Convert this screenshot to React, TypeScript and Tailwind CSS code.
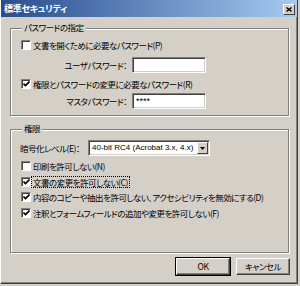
import React from "react";

const jp = "font-['Noto_Sans_CJK_JP',sans-serif] [font-feature-settings:'palt'] text-[8.5px] tracking-[-0.5px] leading-none text-black whitespace-nowrap";

function Check({ checked }: { checked: boolean }) {
  return (
    <span className="w-[10px] h-[10px] shrink-0 bg-white border border-t-[#808080] border-l-[#808080] border-b-white border-r-white shadow-[inset_1px_1px_0_#404040] flex items-center justify-center">
      {checked && (
        <svg width="7" height="7" viewBox="0 0 7 7" className="ml-[1px] mt-[1px]">
          <path d="M0.5 2.5 L2.5 4.5 L6.5 0.5" stroke="#000" strokeWidth="1.6" fill="none" />
        </svg>
      )}
    </span>
  );
}

function CheckRow({ checked, label, focus }: { checked: boolean; label: string; focus?: boolean }) {
  return (
    <div className="flex items-center h-[12px] pl-[10px]">
      <Check checked={checked} />
      <span className={`ml-[1px] px-[1px] py-[1px] ${focus ? "outline outline-1 outline-dotted outline-black" : ""} ${jp}`}>
        {label}
      </span>
    </div>
  );
}

function Sunken({ className, children }: { className?: string; children?: React.ReactNode }) {
  return (
    <div
      className={`bg-white border border-t-[#808080] border-l-[#808080] border-b-white border-r-white shadow-[inset_1px_1px_0_#404040,inset_-1px_-1px_0_#d4d0c8] ${className ?? ""}`}
    >
      {children}
    </div>
  );
}

function Group({ title, className, children }: { title: string; className?: string; children: React.ReactNode }) {
  return (
    <div className={`relative w-[279px] border border-[#808080] shadow-[inset_1px_1px_0_#fff,1px_1px_0_#fff] ${className ?? ""}`}>
      <span className={`absolute left-[11px] top-[-6px] bg-[#d4d0c8] px-[2px] ${jp}`}>{title}</span>
      {children}
    </div>
  );
}

function Button({ label, def }: { label: string; def?: boolean }) {
  const inner = (
    <div className="w-[54px] h-[17px] bg-[#d4d0c8] border border-t-white border-l-white border-b-[#404040] border-r-[#404040] shadow-[inset_-1px_-1px_0_#808080] flex items-center justify-center">
      <span className={jp}>{label}</span>
    </div>
  );
  if (def) return <div className="border border-black">{inner}</div>;
  return inner;
}

export default function App() {
  return (
    <div className="w-[300px] h-[286px] bg-[#d4d0c8]">
      <div className="w-[298px] h-[284px] bg-[#d4d0c8] border-l border-l-white border-r border-r-[#404040] border-b border-b-[#404040] shadow-[inset_-1px_-1px_0_#808080] flex flex-col">
        <div className="h-[17px] bg-gradient-to-r from-[#2a4c8e] to-[#a6caf0] flex items-center justify-between pl-[3px] pr-[2px]">
          <span className="font-['Noto_Sans_CJK_JP',sans-serif] [font-feature-settings:'palt'] text-[9px] tracking-[-0.3px] leading-none font-bold text-white">
            標準セキュリティ
          </span>
          <div className="w-[12px] h-[11px] mt-[2px] bg-[#d4d0c8] border border-t-white border-l-white border-b-[#404040] border-r-[#404040] flex items-center justify-center">
            <svg width="6" height="5" viewBox="0 0 6 5">
              <path d="M0.5 0.5 L5.5 4.5 M5.5 0.5 L0.5 4.5" stroke="#000" strokeWidth="1.4" />
            </svg>
          </div>
        </div>

        <div className="flex flex-col pl-[9px]">
          <Group title="パスワードの指定" className="mt-[11px] h-[88px]">
            <div className="flex flex-col pt-[10px]">
              <CheckRow checked={false} label="文書を開くために必要なパスワード(P)" />
              <div className="flex items-center mt-[6px] h-[16px]">
                <span className={`w-[117px] text-right pr-[1px] ${jp}`}>ユーザパスワード：</span>
                <Sunken className="ml-[4px] w-[74px] h-[16px] bg-[#d4d0c8]" />
              </div>
              <div className="mt-[5px]">
                <CheckRow checked={true} label="権限とパスワードの変更に必要なパスワード(R)" />
              </div>
              <div className="flex items-center mt-[3px] h-[16px]">
                <span className={`w-[117px] text-right pr-[1px] ${jp}`}>マスタパスワード：</span>
                <Sunken className="ml-[4px] w-[74px] h-[16px] flex items-center pl-[3px]">
                  <span className="font-['Liberation_Sans',sans-serif] text-[9px] leading-none text-black">****</span>
                </Sunken>
              </div>
            </div>
          </Group>

          <Group title="権限" className="mt-[13px] h-[124px]">
            <div className="flex flex-col pt-[10px]">
              <div className="flex items-center h-[16px] pl-[9px]">
                <span className={`w-[68px] ${jp}`}>暗号化レベル(E)：</span>
                <Sunken className="w-[122px] h-[16px] flex items-center justify-between pl-[3px] pr-[1px]">
                  <span className="font-['Liberation_Sans',sans-serif] text-[8px] leading-none text-black whitespace-nowrap">
                    40-bit RC4 (Acrobat 3.x, 4.x)
                  </span>
                  <div className="w-[11px] h-[12px] bg-[#d4d0c8] border border-t-white border-l-white border-b-[#404040] border-r-[#404040] flex items-center justify-center">
                    <svg width="5" height="3" viewBox="0 0 5 3">
                      <path d="M0 0 H5 L2.5 3 Z" fill="#000" />
                    </svg>
                  </div>
                </Sunken>
              </div>
              <div className="mt-[4px]">
                <CheckRow checked={false} label="印刷を許可しない(N)" />
              </div>
              <div className="mt-[4px]">
                <CheckRow checked={true} focus label="文書の変更を許可しない(C)" />
              </div>
              <div className="mt-[3px]">
                <CheckRow checked={true} label="内容のコピーや抽出を許可しない、アクセシビリティを無効にする(D)" />
              </div>
              <div className="mt-[4px]">
                <CheckRow checked={true} label="注釈とフォームフィールドの追加や変更を許可しない(F)" />
              </div>
            </div>
          </Group>

          <div className="flex items-center mt-[4px] pl-[165px] gap-[5px]">
            <Button label="OK" def />
            <Button label="キャンセル" />
          </div>
        </div>
      </div>
    </div>
  );
}
